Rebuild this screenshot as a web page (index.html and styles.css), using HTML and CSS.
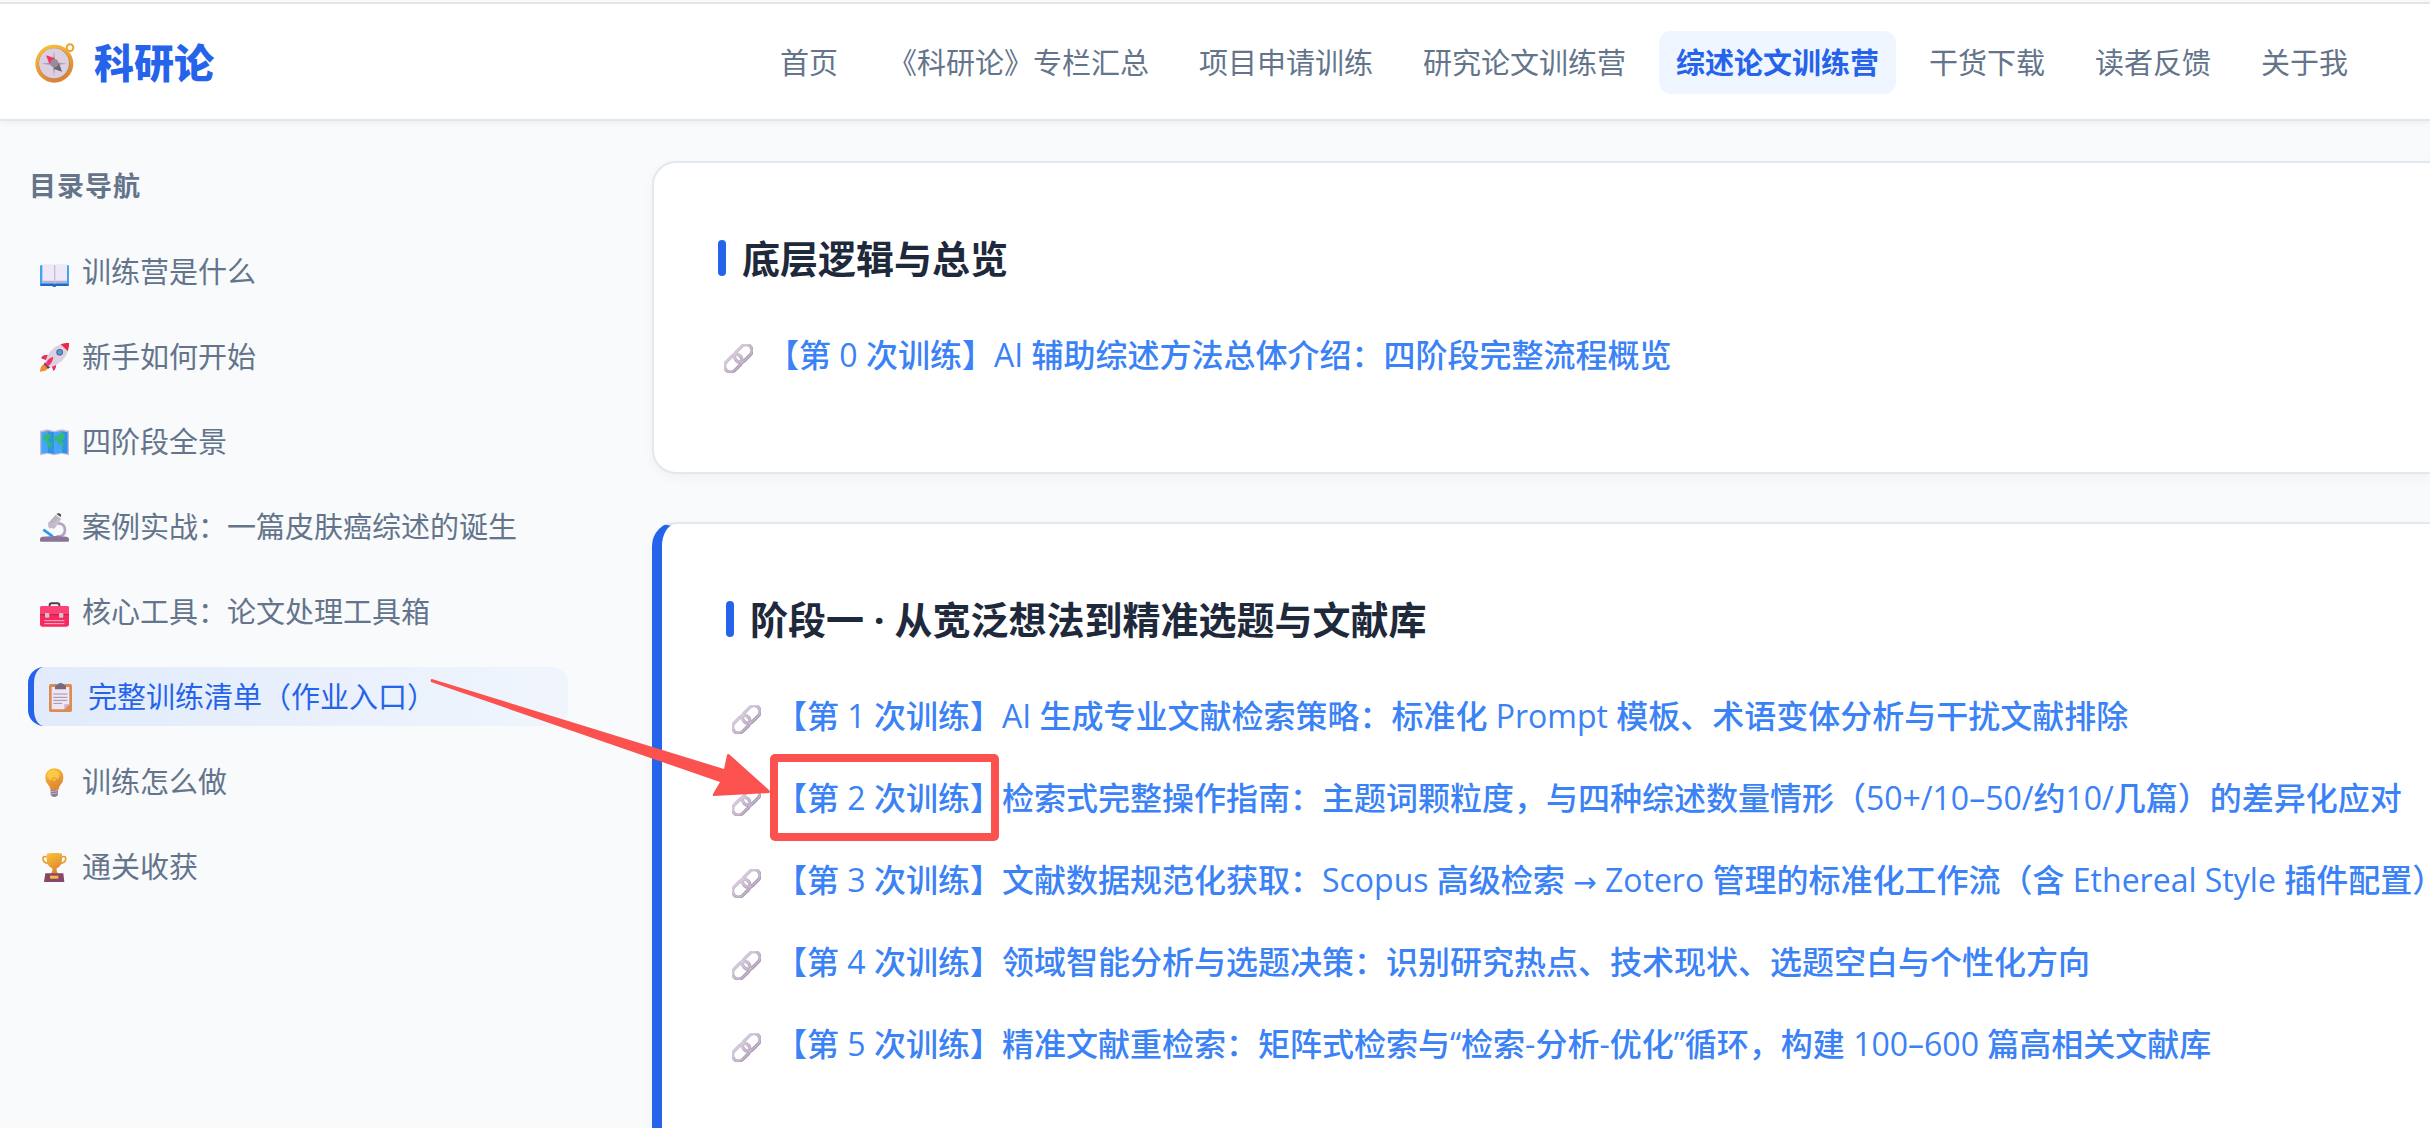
FILE: index.html
```html
<!DOCTYPE html>
<html lang="zh-CN">
<head>
    <meta charset="UTF-8">
    <meta name="viewport" content="width=device-width, initial-scale=1.0">
    <title>科研论 - 综述论文训练营</title>
    <link rel="stylesheet" href="styles.css">
</head>
<body>
    <svg class="defs" aria-hidden="true">
        <defs>
            <linearGradient id="gold" x1="0" y1="0" x2="0.4" y2="1">
                <stop offset="0" stop-color="#fbc638"/>
                <stop offset="1" stop-color="#dd8434"/>
            </linearGradient>
            <linearGradient id="chain" x1="0" y1="0" x2="0" y2="1">
                <stop offset="0" stop-color="#d0c4d7"/>
                <stop offset="1" stop-color="#ad9bb6"/>
            </linearGradient>
            <linearGradient id="metal" x1="0" y1="0" x2="1" y2="1">
                <stop offset="0" stop-color="#a79ba9"/>
                <stop offset="1" stop-color="#dcd4e4"/>
            </linearGradient>
            <symbol id="link" viewBox="0 0 87 87">
                <g transform="rotate(-45 43 43)" fill="none">
                    <rect x="-8" y="25" width="60" height="36" rx="18" stroke="url(#chain)" stroke-width="10"/>
                    <rect x="34" y="25" width="60" height="36" rx="18" stroke="url(#chain)" stroke-width="10"/>
                    <rect x="-8" y="25" width="60" height="36" rx="18" stroke="#ddd3e2" stroke-width="2"/>
                    <rect x="34" y="25" width="60" height="36" rx="18" stroke="#ddd3e2" stroke-width="2"/>
                </g>
            </symbol>
        </defs>
    </svg>

    <header class="header">
        <a class="logo" href="#">
            <svg class="logo-icon" viewBox="0 0 120 120" aria-hidden="true">
                <circle cx="105" cy="14" r="10" fill="none" stroke="#e9a52f" stroke-width="6"/>
                <circle cx="58" cy="62" r="57" fill="url(#gold)"/>
                <circle cx="58" cy="62" r="47" fill="#b8874f"/>
                <circle cx="57" cy="61" r="45" fill="#dccfe0"/>
                <path d="M57 24l4 33 34 5-34 5-4 33-4-33-34-5 34-5z" fill="#aaa0af"/>
                <path d="M38 42l32 8-20 20z" fill="#a09ba4" opacity=".4"/>
                <path d="M33 37l27 9-16 18z" fill="#f0316a"/>
                <path d="M81 86l-26-9 17-17z" fill="#6b6570"/>
                <circle cx="58" cy="61" r="12" fill="#988c98"/>
            </svg>
            <span>科研论</span>
        </a>
        <nav class="nav">
            <a href="#">首页</a>
            <a href="#">《科研论》专栏汇总</a>
            <a href="#">项目申请训练</a>
            <a href="#">研究论文训练营</a>
            <a class="active" href="#">综述论文训练营</a>
            <a href="#">干货下载</a>
            <a href="#">读者反馈</a>
            <a href="#">关于我</a>
        </nav>
    </header>

    <div class="layout">
        <aside class="sidebar">
            <h3>目录导航</h3>
            <ul>
                <li><a href="#">
                    <svg viewBox="0 0 87 87" aria-hidden="true">
                        <path d="M0 25q0-4 5-4h77q5 0 5 4v55q0 4-5 4H49q-6 6-12 0H4q-4 0-4-4z" fill="#3fa5f0"/>
                        <path d="M1 78h85v4q0 2-4 2H49q-6 6-12 0H4q-3 0-3-2z" fill="#2567c4"/>
                        <path d="M7 19h33q4 0 4 4v50H7zM81 19H48q-4 0-4 4v50h37z" fill="#efe8f8"/>
                        <path d="M7 68h33l4 4 4-4h33v7H48l-4 3-4-3H7z" fill="#bdaed0"/>
                        <path d="M44 22v52" stroke="#c9bcd9" stroke-width="4"/>
                    </svg>
                    训练营是什么</a></li>
                <li><a href="#">
                    <svg viewBox="0 0 87 87" aria-hidden="true">
                        <path d="M13 62q-12 5-13 24 20 0 26-13z" fill="#f58a2c"/>
                        <path d="M3 46q5-14 24-9l-8 15zM40 84q12-8 7-26l-13 8z" fill="#ed2d5c"/>
                        <path d="M14 60Q25 16 64 3L85 22Q75 58 29 75z" fill="#dcd0e2"/>
                        <path d="M62 4Q74-1 87 0q1 12-4 24z" fill="#ec2848"/>
                        <path d="M14 58l16 16-6 3-12-13z" fill="#51406f"/>
                        <path d="M17 67q2-20 23-26-2 20-19 30z" fill="#f13266"/>
                        <circle cx="59" cy="28" r="10" fill="#52657f"/>
                        <circle cx="59" cy="28" r="7" fill="#4e9ce9"/>
                    </svg>
                    新手如何开始</a></li>
                <li><a href="#">
                    <svg viewBox="0 0 87 87" aria-hidden="true">
                        <path d="M0 9l22-5 21 5 22-5 22 5v73l-22-5-22 5-21-5-22 5z" fill="#c9b9d8"/>
                        <path d="M4 13l18-4v65L4 77zM43 13l22-4v65l-22 4z" fill="#42a7fb"/>
                        <path d="M22 9l21 4v65l-21-4zM65 9l18 4v64l-18-3z" fill="#2f91ea"/>
                        <path d="M8 25q6-8 15-8l12 4-6 11-6 4 5 5 9 4-2 8-7 9-4-9-3-9-8-7zM38 32l8-7 9-1 6-8 10 0 4 8-3 9-7 5-4 12-7-4-3-9-8 2zM63 47l9-4 2 8-9 2zM64 60l8-3v5l-8 2z" fill="#31b976"/>
                    </svg>
                    四阶段全景</a></li>
                <li><a href="#">
                    <svg viewBox="0 0 87 87" aria-hidden="true">
                        <path d="M44 32q30-5 31 19 0 20-26 20" fill="none" stroke="#b5a5be" stroke-width="8"/>
                        <path d="M0 78q0-6 7-7l37-2 36 2q7 2 7 7v5q0 3-4 3H4q-4 0-4-3z" fill="#8b7497"/>
                        <path d="M10 50l28 20" stroke="#2e98ef" stroke-width="8"/>
                        <path d="M25 30L47 6l17 12-20 28H27z" fill="url(#metal)"/>
                        <path d="M26 26l24 12-8 9-17-6z" fill="#c4b7ce"/>
                        <path d="M49 3l8-3 7 5-2 7z" fill="#554d5b"/>
                    </svg>
                    案例实战：一篇皮肤癌综述的诞生</a></li>
                <li><a href="#">
                    <svg viewBox="0 0 87 87" aria-hidden="true">
                        <path d="M29 26v-5q0-5 5-5h19q5 0 5 5v5" fill="none" stroke="#51404f" stroke-width="6"/>
                        <rect y="24" width="87" height="62" rx="7" fill="#f8295e"/>
                        <path d="M0 32q0-8 7-8h73q7 0 7 8v18H0z" fill="#fc4276"/>
                        <path d="M0 50h87" stroke="#bc1e4f" stroke-width="3"/>
                        <rect x="15" y="45" width="13" height="14" rx="3" fill="#cfc3d1"/>
                        <rect x="57" y="45" width="13" height="14" rx="3" fill="#cfc3d1"/>
                        <path d="M13 68h60M13 77h60" stroke="#f9b4cb" stroke-width="3"/>
                    </svg>
                    核心工具：论文处理工具箱</a></li>
                <li><a class="active" href="#">
                    <svg viewBox="0 0 87 87" aria-hidden="true">
                        <rect x="9" y="3" width="69" height="84" rx="5" fill="#dc8b52"/>
                        <path d="M17 12h53v52L55 79H17z" fill="#eee5f5"/>
                        <path d="M55 79V64h15z" fill="#c4b3d2"/>
                        <path d="M27 19v-8q0-5 7-5 2-6 10-6t10 6q6 0 6 5v8z" fill="#756b7d"/>
                        <path d="M22 33h42M22 43h42M22 52h42M22 61h26" stroke="#9d92a7" stroke-width="3"/>
                    </svg>
                    完整训练清单（作业入口）</a></li>
                <li><a href="#">
                    <svg viewBox="0 0 87 87" aria-hidden="true">
                        <path d="M32 65h22v15q-4 7-11 7t-11-7z" fill="#8c7897"/>
                        <path d="M32 71l22-3M32 78l22-3" stroke="#c2b3cb" stroke-width="3"/>
                        <path d="M43 1q27 2 27 28 0 13-9 22-5 6-6 15H32q-1-9-7-15-9-9-9-22Q16 3 43 1z" fill="url(#gold)"/>
                        <ellipse cx="40" cy="22" rx="19" ry="16" fill="#ffd64b" opacity=".7"/>
                        <path d="M38 66V50q-6-12 0-18 6-5 11 0 6 6 0 18v16" fill="none" stroke="#e79528" stroke-width="3"/>
                    </svg>
                    训练怎么做</a></li>
                <li><a href="#">
                    <svg viewBox="0 0 87 87" aria-hidden="true">
                        <path d="M20 12Q8 7 9 19q2 12 20 13M66 12q12-5 11 7-2 12-20 13" fill="none" stroke="#e99a32" stroke-width="5"/>
                        <path d="M20 2q23-5 46 0v15q0 23-16 29v8q1 6 8 8H29q7-2 8-8v-8Q20 40 20 17z" fill="url(#gold)"/>
                        <path d="M16 61h54l3 26H12z" fill="#8a4669"/>
                        <rect x="30" y="68" width="25" height="9" fill="#f7bc3f"/>
                    </svg>
                    通关收获</a></li>
            </ul>
        </aside>

        <main class="content">
            <section class="card">
                <h2>底层逻辑与总览</h2>
                <ul class="lessons">
                    <li><svg aria-hidden="true"><use href="#link"/></svg><a href="#">【第 0 次训练】AI 辅助综述方法总体介绍：四阶段完整流程概览</a></li>
                </ul>
            </section>
            <section class="card stage">
                <h2>阶段一 · 从宽泛想法到精准选题与文献库</h2>
                <ul class="lessons">
                    <li><svg aria-hidden="true"><use href="#link"/></svg><a href="#">【第 1 次训练】AI 生成专业文献检索策略：标准化 Prompt 模板、术语变体分析与干扰文献排除</a></li>
                    <li><svg aria-hidden="true"><use href="#link"/></svg><a href="#">【第 2 次训练】检索式完整操作指南：主题词颗粒度，与四种综述数量情形（50+/10–50/约10/几篇）的差异化应对</a></li>
                    <li><svg aria-hidden="true"><use href="#link"/></svg><a href="#">【第 3 次训练】文献数据规范化获取：Scopus 高级检索 <span class="to">→</span> Zotero 管理的标准化工作流（含 Ethereal Style 插件配置）</a></li>
                    <li><svg aria-hidden="true"><use href="#link"/></svg><a href="#">【第 4 次训练】领域智能分析与选题决策：识别研究热点、技术现状、选题空白与个性化方向</a></li>
                    <li><svg aria-hidden="true"><use href="#link"/></svg><a href="#">【第 5 次训练】精准文献重检索：矩阵式检索与“检索-分析-优化”循环，构建 100–600 篇高相关文献库</a></li>
                </ul>
            </section>
        </main>
    </div>

    <!-- 标注：箭头和红框 -->
    <svg class="mark" viewBox="0 0 570 164" aria-hidden="true">
        <path d="M2 1L294 91l3-14q1-2 3 0l39 35q2 2 0 3l-55 3q-2 0-1-2l7-12L1 4Q0 1 2 1z"/>
        <rect x="344" y="80" width="221" height="79" rx="1"/>
    </svg>
</body>
</html>
```

FILE: styles.css
```css
* {
    margin: 0;
    padding: 0;
    box-sizing: border-box;
}
body {
    height: 100vh;
    overflow: hidden;
    position: relative;
    background: #f8fafc;
    color: #1e293b;
    font-family: "Open Sans", "Noto Sans CJK SC", sans-serif;
}
ul {
    list-style: none;
}
a {
    color: inherit;
    text-decoration: none;
}
.defs {
    position: absolute;
    width: 0;
    height: 0;
}

/* 顶部导航 */
.header {
    display: flex;
    align-items: center;
    justify-content: space-between;
    height: 119px;
    margin-top: 2px;
    padding: 2px 65px 0 35px;
    background: #fff;
    border-top: 2px solid #e5e5e5;
    border-bottom: 2px solid #e2e8f0;
    box-shadow: 0 2px 6px rgba(0, 0, 0, 0.05);
}
.logo {
    display: flex;
    align-items: center;
    gap: 19px;
    color: #2563eb;
    font-size: 40px;
    font-weight: 800;
    line-height: 64px;
}
.logo-icon {
    width: 40px;
    height: 40px;
}
.nav {
    display: flex;
    gap: 16px;
    color: #64748b;
    font-size: 29px;
    line-height: 47px;
    white-space: nowrap;
}
.nav a {
    padding: 8px 17px;
    border-radius: 12px;
}
.nav .active {
    background: #eff6ff;
    color: #2563eb;
    font-weight: 700;
}

.layout {
    display: flex;
    gap: 84px;
    padding: 40px 0 0 28px;
}

/* 左侧目录 */
.sidebar {
    width: 540px;
    flex-shrink: 0;
}
.sidebar h3 {
    margin-bottom: 31px;
    padding: 4px 1px;
    color: #64748b;
    font-size: 27px;
    line-height: 42px;
    letter-spacing: 1px;
}
.sidebar ul {
    display: flex;
    flex-direction: column;
    gap: 26px;
}
.sidebar li a {
    display: flex;
    align-items: center;
    gap: 13px;
    padding: 8px 12px;
    border-radius: 16px;
    color: #64748b;
    font-size: 29px;
    line-height: 43px;
    white-space: nowrap;
}
.sidebar li svg {
    width: 29px;
    height: 29px;
    margin-top: 2px;
    flex-shrink: 0;
}
.sidebar li .active {
    border-left: 6px solid #2563eb;
    background: linear-gradient(90deg, #e1ebfb, #f0f5fd);
    color: #2563eb;
}

/* 训练清单 */
.content {
    flex: 1;
    min-width: 0;
}
.card {
    margin-bottom: 48px;
    padding: 64px 0 64px 64px;
    background: #fff;
    border: 2px solid #e2e8f0;
    border-right: 0;
    border-radius: 24px 0 0 24px;
    box-shadow: 0 4px 12px rgba(0, 0, 0, 0.04);
}
.card.stage {
    border-left: 10px solid #2563eb;
}
.card h2 {
    display: flex;
    align-items: center;
    gap: 16px;
    margin-bottom: 37px;
    font-size: 38px;
    line-height: 62px;
}
.card h2::before {
    content: "";
    width: 8px;
    height: 36px;
    border-radius: 4px;
    background: #2563eb;
}
.lessons li {
    display: flex;
    align-items: center;
    gap: 14px;
    margin-bottom: 24px;
    padding-left: 6px;
    line-height: 58px;
}
.lessons svg {
    width: 29px;
    height: 29px;
    margin-top: 6px;
    flex-shrink: 0;
}
.lessons a {
    color: #3b82f6;
    font-size: 32px;
    font-weight: 500;
    white-space: nowrap;
}
.lessons .to {
    font-family: "DejaVu Sans", sans-serif;
    font-size: 28px;
    line-height: 1;
}

.mark {
    position: absolute;
    left: 430px;
    top: 678px;
    width: 570px;
    height: 164px;
    fill: #fb5250;
}
.mark rect {
    fill: none;
    stroke: #fb5250;
    stroke-width: 8px;
    stroke-linejoin: round;
}
```
